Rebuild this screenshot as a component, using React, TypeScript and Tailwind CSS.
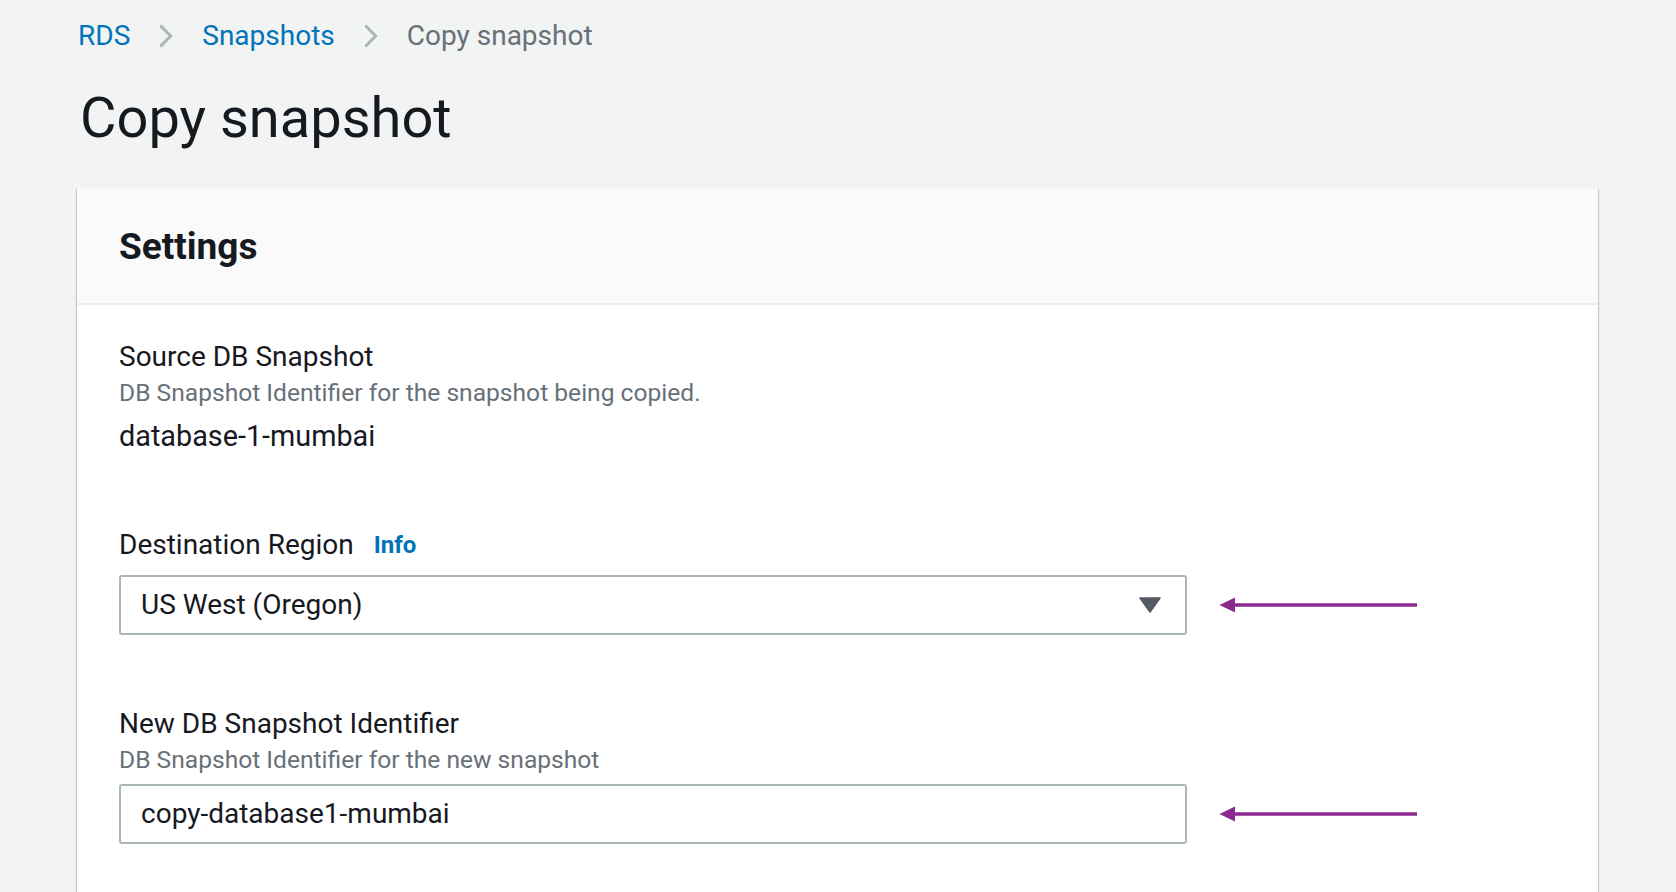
import { ChevronRight } from "lucide-react";

const font = { fontFamily: "Roboto, 'Noto Sans', sans-serif" };

function Arrow() {
  return (
    <svg width="200" height="18" viewBox="0 0 200 18" className="shrink-0">
      <line x1="14" y1="9" x2="198" y2="9" stroke="#8a2a8c" strokeWidth="3.5" />
      <path d="M0.5 9 L16 1.5 L16 16.5 Z" fill="#8a2a8c" />
    </svg>
  );
}

function Field({
  label,
  info,
  desc,
  children,
}: {
  label: string;
  info?: boolean;
  desc?: string;
  children: React.ReactNode;
}) {
  return (
    <div className="flex flex-col">
      <div className="flex items-center gap-[20px] text-[28px] leading-[36px] text-[#16191f]">
        {label}
        {info && (
          <span className="text-[24px] font-bold text-[#0073bb]">Info</span>
        )}
      </div>
      {desc && (
        <div className="text-[24.6px] leading-[35px] text-[#687078]">{desc}</div>
      )}
      {children}
    </div>
  );
}

export default function App() {
  return (
    <div
      className="min-h-[892px] w-full overflow-hidden bg-[#f2f3f3] pl-[78px] pr-[78px]"
      style={font}
    >
      {/* breadcrumb */}
      <nav className="flex h-[72px] items-center text-[28px]">
        <span className="text-[#0073bb]">RDS</span>
        <ChevronRight size={38} strokeWidth={2} className="mx-[17px] text-[#aab7b8]" />
        <span className="text-[#0073bb]">Snapshots</span>
        <ChevronRight size={38} strokeWidth={2} className="mx-[17px] text-[#aab7b8]" />
        <span className="text-[#687078]">Copy snapshot</span>
      </nav>

      <h1 className="ml-[2px] h-[116px] pt-[4px] text-[56px] leading-[84px] text-[#16191f]">
        Copy snapshot
      </h1>

      {/* card */}
      <div className="w-[1521px] -ml-[1px] bg-white shadow-[0_1px_1px_0_rgba(0,28,36,0.3),1px_1px_1px_0_rgba(0,28,36,0.15),-1px_1px_1px_0_rgba(0,28,36,0.15)]">
        <div className="flex h-[117px] items-center border-b-2 border-[#eaeded] bg-[#fafafa] px-[42px]">
          <h2 className="pt-[2px] text-[37px] font-bold text-[#16191f]">Settings</h2>
        </div>

        <div className="flex flex-col px-[42px] pt-[34px] pb-[80px]">
          <Field
            label="Source DB Snapshot"
            desc="DB Snapshot Identifier for the snapshot being copied."
          >
            <div className="mt-[7px] text-[28.8px] leading-[38px] text-[#16191f]">
              database-1-mumbai
            </div>
          </Field>

          <div className="mt-[72px]">
            <Field label="Destination Region" info>
              <div className="mt-[12px] flex items-center gap-[32px]">
                <div className="flex h-[60px] w-[1068px] items-center justify-between rounded-[3px] border-2 border-[#aab7b8] pl-[20px] pr-[24px] text-[28px] text-[#16191f]">
                  <span>US West (Oregon)</span>
                  <svg width="22" height="16" viewBox="0 0 22 16">
                    <path d="M1 1 L21 1 L11 15 Z" fill="#545b64" strokeLinejoin="round" stroke="#545b64" strokeWidth="1.5" />
                  </svg>
                </div>
                <Arrow />
              </div>
            </Field>
          </div>

          <div className="mt-[71px]">
            <Field
              label="New DB Snapshot Identifier"
              desc="DB Snapshot Identifier for the new snapshot"
            >
              <div className="mt-[7px] flex items-center gap-[32px]">
                <div className="flex h-[60px] w-[1068px] items-center rounded-[3px] border-2 border-[#aab7b8] pl-[20px] text-[28px] text-[#16191f]">
                  copy-database1-mumbai
                </div>
                <Arrow />
              </div>
            </Field>
          </div>
        </div>
      </div>
    </div>
  );
}
